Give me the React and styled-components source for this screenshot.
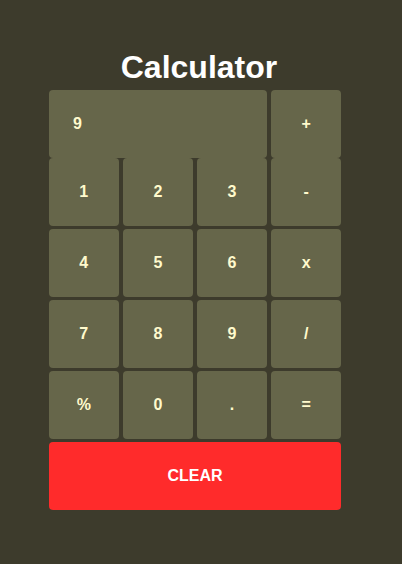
import React, { useState } from "react";
import styled, { createGlobalStyle } from "styled-components";

const GlobalStyle = createGlobalStyle`
  html, body {
    margin: 0;
    padding: 0;
    background-color: #3d3b2c;
    font-family: "Liberation Sans", Arial, sans-serif;
  }
`;

const Page = styled.div`
  min-height: 564px;
  padding-top: 49px;
  box-sizing: border-box;
`;

const Title = styled.h1`
  margin: 0 0 4px 0;
  padding-right: 4px;
  text-align: center;
  color: #ffffff;
  font-size: 32px;
  font-weight: 700;
  line-height: 37px;
`;

const Pad = styled.div`
  width: 292px;
  margin-left: 49px;
  display: flex;
  flex-direction: column;
`;

const Grid = styled.div`
  display: grid;
  grid-template-columns: repeat(4, 1fr);
  grid-auto-rows: 68px;
  column-gap: 4.5px;
  row-gap: 3px;
`;

const Display = styled.div`
  grid-column: span 3;
  display: flex;
  align-items: center;
  padding-left: 24px;
  background-color: #66664a;
  border-radius: 4px;
  color: #fffacd;
  font-size: 16px;
  font-weight: 700;
`;

const Key = styled.button`
  border: none;
  border-radius: 4px;
  background-color: #66664a;
  color: #fffacd;
  font-family: inherit;
  font-size: 16px;
  font-weight: 700;
  cursor: pointer;
  padding: 0;
`;

const Clear = styled.button`
  margin-top: 3px;
  height: 68px;
  border: none;
  border-radius: 4px;
  background-color: #ff2b2b;
  color: #ffffff;
  font-family: inherit;
  font-size: 16px;
  font-weight: 700;
  cursor: pointer;
`;

const keys = ["1", "2", "3", "-", "4", "5", "6", "x", "7", "8", "9", "/", "%", "0", ".", "="];

export default function App() {
  const [value, setValue] = useState("9");

  const press = (k) => {
    if (k === "=") {
      try {
        const expr = value.replace(/x/g, "*").replace(/%/g, "/100");
        setValue(String(Function(`"use strict";return (${expr})`)()));
      } catch (e) {
        setValue("Error");
      }
      return;
    }
    setValue((v) => (v === "0" || v === "Error" ? k : v + k));
  };

  return (
    <>
      <GlobalStyle />
      <Page>
        <Title>Calculator</Title>
        <Pad>
          <Grid>
            <Display>{value}</Display>
            <Key onClick={() => press("+")}>+</Key>
          </Grid>
          <Grid>
            {keys.map((k) => (
              <Key key={k} onClick={() => press(k)}>
                {k}
              </Key>
            ))}
          </Grid>
          <Clear onClick={() => setValue("0")}>CLEAR</Clear>
        </Pad>
      </Page>
    </>
  );
}
